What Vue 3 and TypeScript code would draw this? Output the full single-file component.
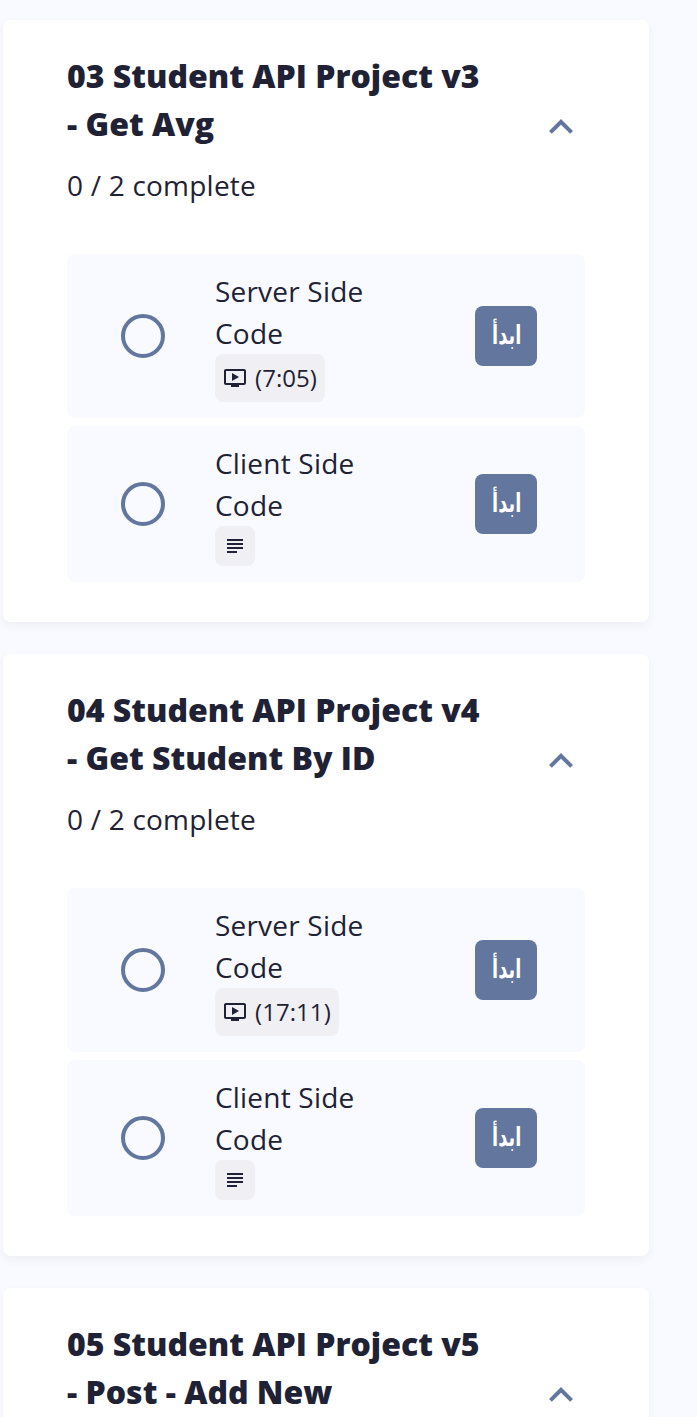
<script setup lang="ts">
interface Lesson {
  title: string
  kind: 'video' | 'text'
  duration?: string
}

interface Section {
  id: number
  title: string
  lessons: Lesson[]
}

const makeLessons = (duration: string): Lesson[] => [
  { title: 'Server Side Code', kind: 'video', duration },
  { title: 'Client Side Code', kind: 'text' },
]

const sections: Section[] = [
  { id: 3, title: '03 Student API Project v3 - Get Avg', lessons: makeLessons('7:05') },
  { id: 4, title: '04 Student API Project v4 - Get Student By ID', lessons: makeLessons('17:11') },
  { id: 5, title: '05 Student API Project v5 - Post - Add New', lessons: [] },
]
</script>

<template>
  <main class="page">
    <section v-for="section in sections" :key="section.id" class="card">
      <header class="head">
        <div class="head-text">
          <h2 class="title">{{ section.title }}</h2>
          <p v-if="section.lessons.length" class="progress">0 / {{ section.lessons.length }} complete</p>
        </div>
        <svg class="chevron" viewBox="0 0 24 24">
          <path d="M12 8l-6 6 1.41 1.41L12 10.83l4.59 4.58L18 14z" />
        </svg>
      </header>
      <ul v-if="section.lessons.length" class="lessons">
        <li v-for="lesson in section.lessons" :key="lesson.title" class="lesson">
          <span class="status"></span>
          <div class="info">
            <span class="name">{{ lesson.title }}</span>
            <span class="badge" :class="lesson.kind">
              <svg class="icon" viewBox="0 0 24 24">
                <path
                  v-if="lesson.kind === 'video'"
                  d="M21 3H3c-1.11 0-2 .89-2 2v12c0 1.1.89 2 2 2h5v2h8v-2h5c1.1 0 1.99-.9 1.99-2L23 5c0-1.11-.9-2-2-2zm0 14H3V5h18v12zm-5-6l-7 4V7z"
                />
                <path
                  v-else
                  d="M14 17H4v2h10v-2zm6-8H4v2h16V9zM4 15h16v-2H4v2zM4 5v2h16V5H4z"
                />
              </svg>
              <span v-if="lesson.duration">({{ lesson.duration }})</span>
            </span>
          </div>
          <button class="start" type="button" lang="ar" dir="rtl">
            <span class="start-label">ابدأ</span>
          </button>
        </li>
      </ul>
    </section>
  </main>
</template>

<style>
body {
  background: #f8faff;
}
</style>

<style scoped>
.page {
  box-sizing: border-box;
  height: 1417px;
  overflow: hidden;
  padding: 20px 48px 0 3px;
  background: #f8faff;
  color: #1f2235;
  font-family: "Open Sans", "Noto Sans", sans-serif;
}

.card {
  box-sizing: border-box;
  height: 602px;
  margin-bottom: 32px;
  padding: 32px 64px 40px;
  border-radius: 8px;
  background: #fff;
  box-shadow: 0 4px 10px rgba(31, 34, 53, 0.05);
}

.head {
  display: flex;
  align-items: flex-start;
  justify-content: space-between;
  height: 154px;
  margin-bottom: 48px;
}

.title {
  width: 430px;
  margin: 0;
  font-size: 32px;
  font-weight: 800;
  line-height: 48px;
}

.progress {
  margin: 16px 0 0;
  font-size: 28px;
  line-height: 42px;
  letter-spacing: 0.22px;
}

.chevron {
  width: 48px;
  height: 48px;
  margin-top: 51px;
  fill: #63769e;
}

.lessons {
  display: flex;
  flex-direction: column;
  gap: 8px;
  margin: 0;
  padding: 0;
  list-style: none;
}

.lesson {
  display: flex;
  align-items: center;
  padding: 16px 48px 16px 54px;
  border-radius: 8px;
  background: #f8faff;
}

.status {
  box-sizing: border-box;
  width: 44px;
  height: 44px;
  margin-right: 50px;
  border: 4px solid #63769e;
  border-radius: 50%;
}

.info {
  display: flex;
  flex-direction: column;
  align-items: flex-start;
  width: 180px;
}

.name {
  font-size: 28px;
  line-height: 42px;
  letter-spacing: 0.2px;
}

.badge {
  box-sizing: border-box;
  display: flex;
  align-items: center;
  gap: 8px;
  height: 48px;
  padding: 0 8px;
  border-radius: 8px;
  background: #f0eff4;
  font-size: 24px;
  line-height: 32px;
  letter-spacing: 0.06px;
}

.badge.text {
  height: 40px;
}

.icon {
  flex: none;
  width: 24px;
  height: 24px;
  fill: #1f2235;
}

.start {
  width: 62px;
  height: 60px;
  margin-left: auto;
  padding: 0;
  border: 0;
  border-radius: 8px;
  background: #63769e;
  color: #fff;
  font: bold 24px/60px "DejaVu Sans", sans-serif;
}

.start-label {
  display: inline-block;
  transform: translate(1px, -1px) scale(0.74, 1.08);
}
</style>
